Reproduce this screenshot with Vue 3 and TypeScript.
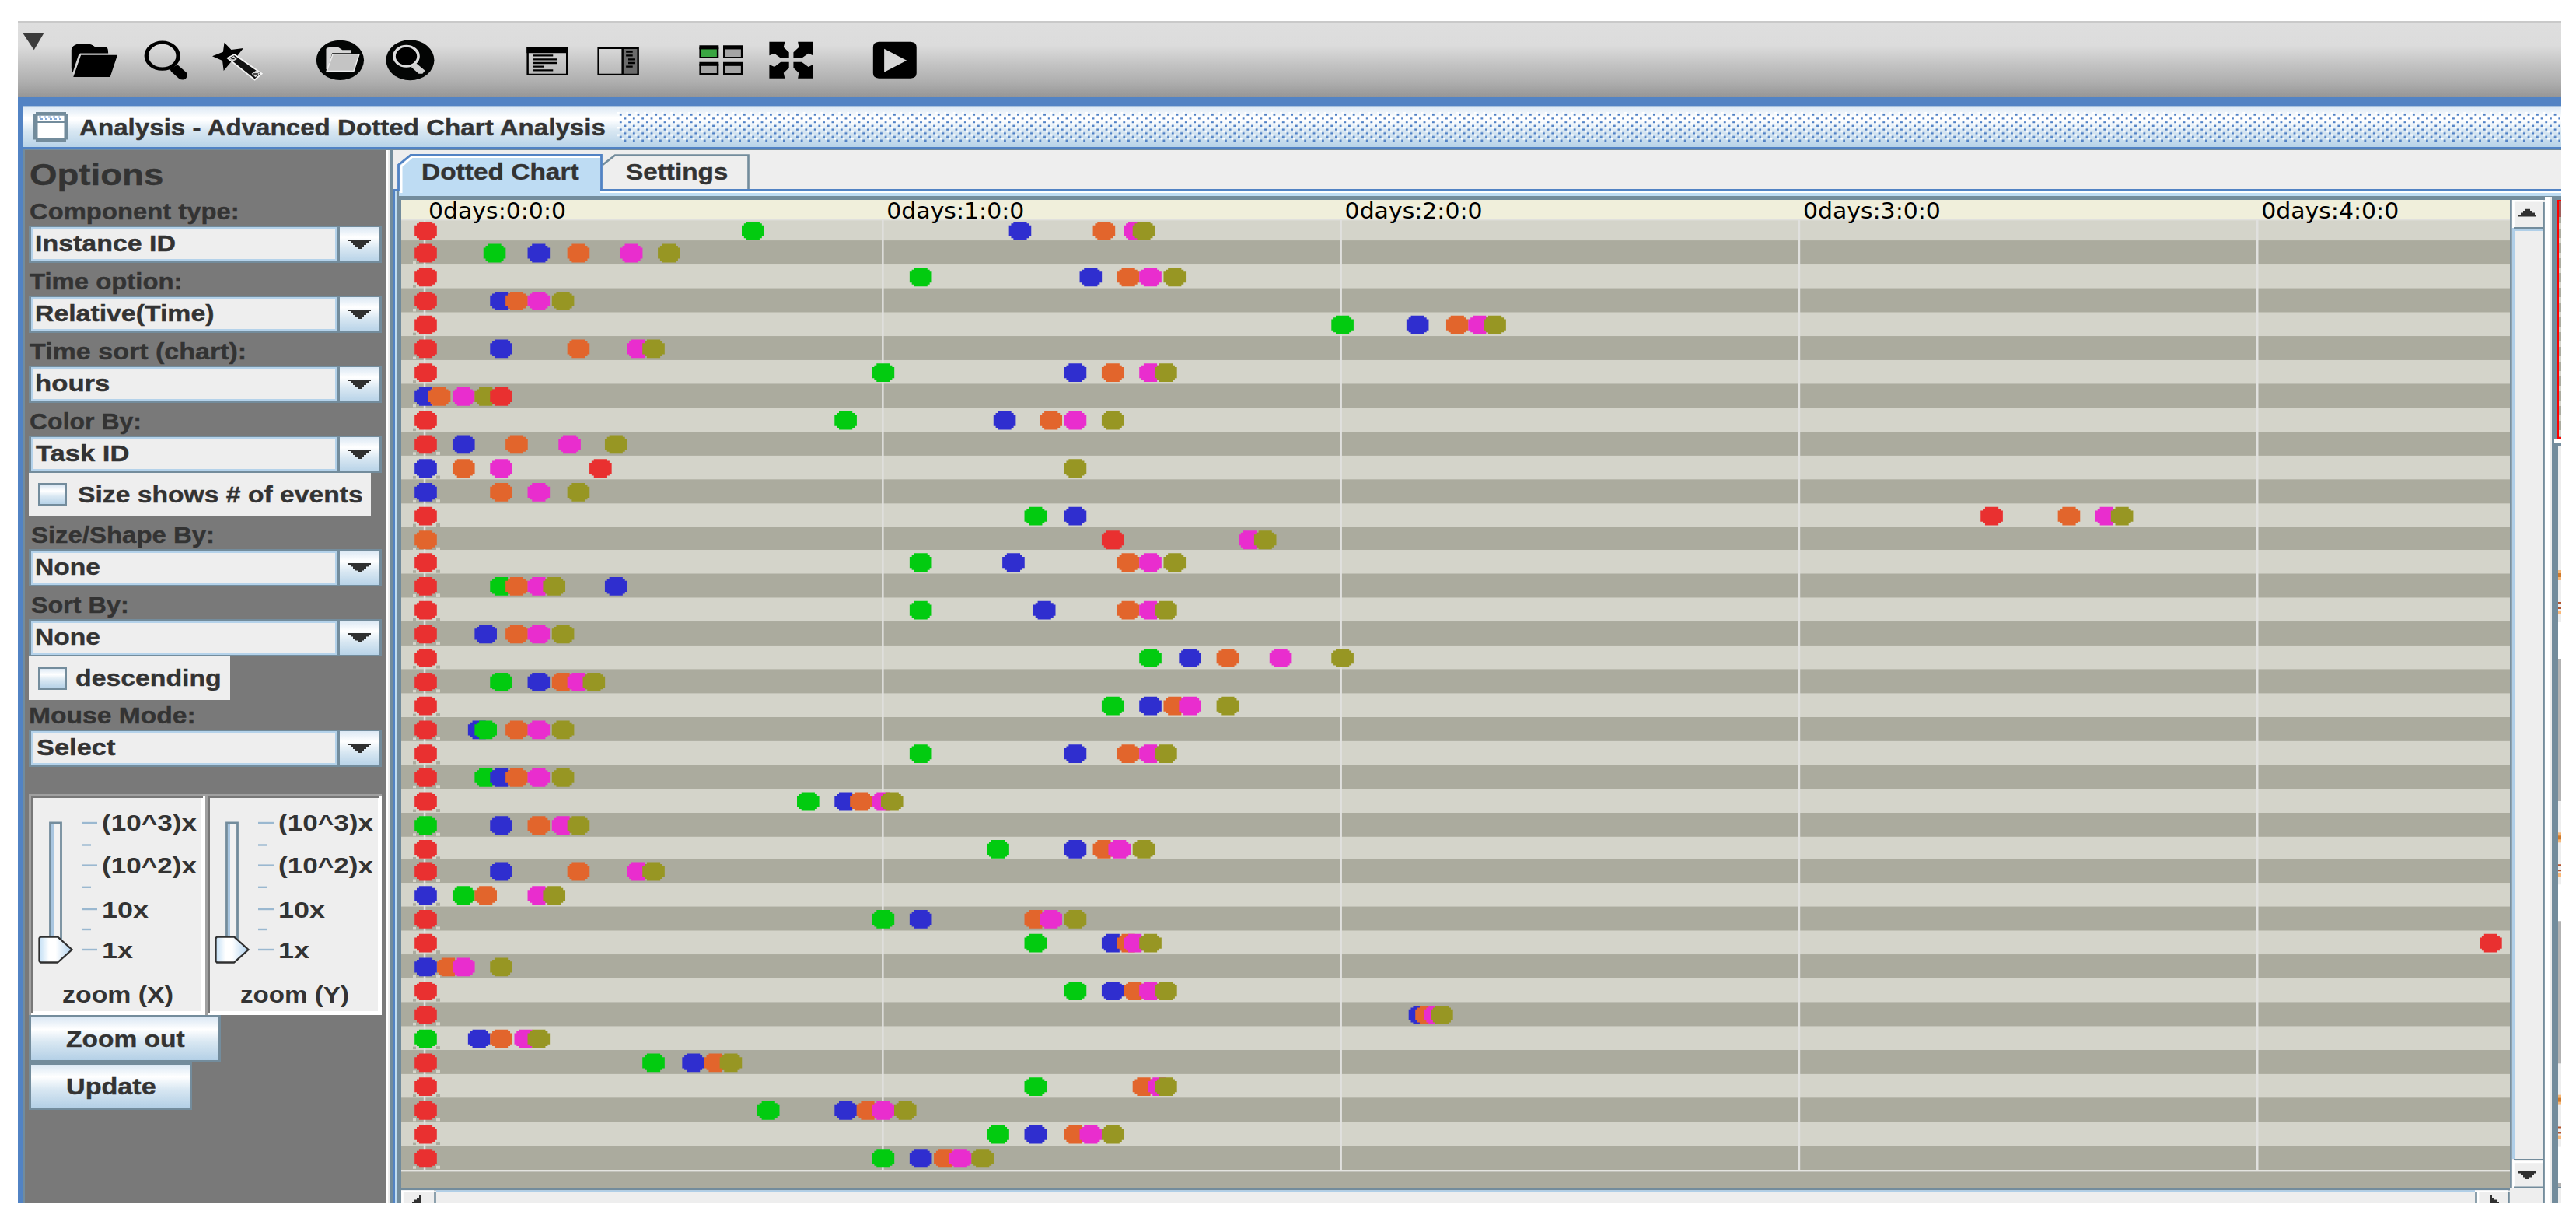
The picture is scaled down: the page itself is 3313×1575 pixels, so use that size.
<script setup lang="ts">
import type { Directive } from 'vue'

/* Stretches a text run horizontally so that it fills the given width. */
const vFit: Directive<HTMLElement, number> = {
  mounted(el, binding) {
    el.style.transform = `scaleX(${binding.value / el.offsetWidth})`
  },
}

interface Shape { d: string; fill?: string; stroke?: string; sw?: number }
interface Icon { name: string; gap: number; x: number; w: number; shapes: Shape[] }

/* Icon artwork sits on a grid of 2.45 x 3 units per pixel. */
const GX = 2.45
const icons: Icon[] = [
  { name: 'menu', gap: 16, x: 72, w: 70, shapes: [{ d: 'M72 126H140L108 193Z', fill: '#3c3c3c' }] },
  { name: 'open', gap: 82, x: 224, w: 150, shapes: [
    { d: 'M226 192Q228 176 244 170H282Q294 172 302 183H336Q342 184 342 206H254L248 214L230 280L226 264Z' },
    { d: 'M256 212H371L348 297H232Z' },
    { d: 'M232 286L254 208H342', fill: 'none', stroke: '#d8d8d8', sw: 4 },
  ] },
  { name: 'find', gap: 80, x: 454, w: 140, shapes: [
    { d: 'M512 164A50 51 0 1 0 512 266A50 51 0 1 0 512 164Z', fill: 'none', stroke: '#000', sw: 13 },
    { d: 'M536 266L560 250L588 280Q594 290 586 304Q576 312 564 302L540 276Z' },
  ] },
  { name: 'wand', gap: 74, x: 668, w: 160, shapes: [
    { d: 'M706 164L728 192L766 186L748 214L752 240L728 238L704 273L700 234L668 217L702 200Z' },
    { d: 'M716 224L738 210L824 284L802 308Z', fill: '#111', stroke: '#f4f4f4', sw: 5 },
    { d: 'M722 226L736 216L746 228L732 238ZM792 284L806 272L818 284L804 298Z', fill: '#d8d8d8' },
    { d: 'M728 226H738M798 285H812', fill: 'none', stroke: '#111', sw: 5 },
  ] },
  { name: 'open-circle', gap: 166, x: 994, w: 154, shapes: [
    { d: 'M1071 155A75 77 0 1 0 1071 309A75 77 0 1 0 1071 155Z', fill: '#030504' },
    { d: 'M1027 268V190Q1028 183 1036 183H1066L1078 193H1106V205H1046L1031 268Z', fill: '#d6d6d6' },
    { d: 'M1048 209H1131L1114 274H1029Z', fill: '#c4c4c4', stroke: '#ececec', sw: 4 },
  ] },
  { name: 'find-circle', gap: 68, x: 1216, w: 156, shapes: [
    { d: 'M1293 154A76 78 0 1 0 1293 310A76 78 0 1 0 1293 154Z', fill: '#030504' },
    { d: 'M1281 178A38 39 0 1 0 1281 256A38 39 0 1 0 1281 178Z', fill: '#000', stroke: '#dcdcdc', sw: 9 },
    { d: 'M1296 258L1312 244L1340 272L1332 284H1320Z', fill: '#d0d0d0' },
  ] },
  { name: 'text-window', gap: 288, x: 1660, w: 134, shapes: [
    { d: 'M1664 186H1788V287H1664Z', fill: 'none', stroke: '#000', sw: 6 },
    { d: 'M1661 183H1791V205H1661Z' },
    { d: 'M1682 214H1744M1682 229H1758M1682 243H1758M1682 257H1716M1682 271H1744', fill: 'none', stroke: '#000', sw: 7 },
  ] },
  { name: 'split-window', gap: 88, x: 1882, w: 134, shapes: [
    { d: 'M1962 186H2011V287H1962Z', fill: '#6b6b6b' },
    { d: 'M1886 186H2011V287H1886ZM1962 186V287', fill: 'none', stroke: '#000', sw: 6 },
    { d: 'M1973 200H1994M1973 214H1994M1980 229H2002M1980 243H2002M1973 257H1994', fill: 'none', stroke: '#000', sw: 7 },
  ] },
  { name: 'tiles', gap: 186, x: 2202, w: 140, shapes: [
    { d: 'M2206 187H2261V222H2206Z', fill: '#3aa642', stroke: '#000', sw: 6 },
    { d: 'M2281 187H2337V222H2281ZM2206 250H2261V285H2206ZM2281 250H2337V285H2281Z', fill: '#a4a4a4', stroke: '#000', sw: 6 },
    { d: 'M2203 175H2264V190H2203ZM2278 175H2340V190H2278ZM2203 239H2264V254H2203ZM2278 239H2340V254H2278Z' },
  ] },
  { name: 'expand', gap: 82, x: 2424, w: 140, shapes: [
    { d: 'M2425 161H2474L2470 182L2487 202V224H2461L2441 206L2425 214Z' },
    { d: 'M2563 161H2515L2518 182L2501 202V224H2527L2548 206L2563 214Z' },
    { d: 'M2425 302H2474L2470 281L2487 262V239H2461L2441 258L2425 249Z' },
    { d: 'M2563 302H2515L2518 281L2501 262V239H2527L2548 258L2563 249Z' },
  ] },
  { name: 'run', gap: 186, x: 2750, w: 140, shapes: [
    { d: 'M2770 161H2871Q2889 163 2889 182V282Q2889 300 2871 302H2770Q2752 300 2752 282V182Q2752 163 2770 161Z' },
    { d: 'M2787 188L2858 233L2787 278Z', fill: '#d8d8d8' },
  ] },
]

interface Field { label: string; labelWidth: number; inset: number; value: string; valueWidth: number; valueInset: number; tight?: boolean; check?: { text: string; width: number; box: number; inset: number } }
const fields: Field[] = [
  { label: 'Component type:', labelWidth: 270, inset: 2, value: 'Instance ID', valueWidth: 181, valueInset: 2 },
  { label: 'Time option:', labelWidth: 196, inset: 2, value: 'Relative(Time)', valueWidth: 231, valueInset: 2 },
  { label: 'Time sort (chart):', labelWidth: 279, inset: 2, value: 'hours', valueWidth: 96, valueInset: 2 },
  { label: 'Color By:', labelWidth: 144, inset: 2, value: 'Task ID', valueWidth: 121, valueInset: 3, check: { text: 'Size shows # of events', width: 367, box: 440, inset: 100 } },
  { label: 'Size/Shape By:', labelWidth: 236, inset: 4, value: 'None', valueWidth: 84, valueInset: 2 },
  { label: 'Sort By:', labelWidth: 126, inset: 4, value: 'None', valueWidth: 84, valueInset: 2, check: { text: 'descending', width: 188, box: 259, inset: 97 } },
  { label: 'Mouse Mode:', labelWidth: 215, inset: 1, value: 'Select', valueWidth: 101, valueInset: 4, tight: true },
]

const sliders = [
  { title: 'zoom (X)', x: 43, w: 143 },
  { title: 'zoom (Y)', x: 45, w: 140 },
]
const marks = [
  { text: '(10^3)x', x: 94, y: 47, w: 122, tick: 37 },
  { text: '(10^2)x', x: 94, y: 101.5, w: 122, tick: 91.6 },
  { text: '10x', x: 94, y: 158.5, w: 60, tick: 148 },
  { text: '1x', x: 94, y: 210.5, w: 40, tick: 200 },
]
const minorTicks = [65.5, 119.8, 174]

/* Events per instance: colour key followed by minutes since the case start. */
const rows: string[] = [
  'R0 G43 B78 O89 M93 Y94', 'R0 G9 B15 O20 M27 Y32', 'R0 G65 B87 O92 M95 Y98', 'R0 B10 O12 M15 Y18',
  'R0 G120 B130 O135 M138 Y140', 'R0 B10 O20 M28 Y30', 'R0 G60 B85 O90 M95 Y97', 'B0 O2 M5 Y8 R10',
  'R0 G55 B76 O82 M85 Y90', 'R0 B5 O12 M19 Y25', 'B0 O5 M10 R23 Y85', 'B0 O10 M15 Y20',
  'R0 G80 B85 R205 O215.2 M220.2 Y222.2', 'O0 R90 M108 Y110', 'R0 G65 B77 O92 M95 Y98', 'R0 G10 O12 M15 Y17 B25',
  'R0 G65 B81 O92 M95 Y97', 'R0 B8 O12 M15 Y18', 'R0 G95 B100 O105 M112 Y120', 'R0 G10 B15 O18 M20 Y22',
  'R0 G90 B95 O98 M100 Y105', 'R0 B7 G8 O12 M15 Y18', 'R0 G65 B85 O92 M95 Y97', 'R0 G8 B10 O12 M15 Y18',
  'R0 G50 B55 O57 M60 Y61', 'G0 B10 O15 M18 Y20', 'R0 G75 B85 O89 M91 Y94', 'R0 B10 O20 M28 Y30',
  'B0 G5 O8 M15 Y17', 'R0 G60 B65 O80 M82 Y85', 'R0 G80 B90 O92 M93 Y95 R270.4', 'B0 O3 M5 Y10',
  'R0 G85 B90 O93 M95 Y97', 'R0 B130.2 O131.1 M132.3 Y133.2', 'G0 B7 O10 M13 Y15', 'R0 G30 B35 O38 Y40',
  'R0 G80 O94 M96 Y97', 'R0 G45 B55 O58 M60 Y63', 'R0 G75 B80 O85 M87 Y90', 'R0 G60 B65 O68 M70 Y73',
]
const colours: Record<string, string> = { R: '#e93030', G: '#02cb10', B: '#2f2ecf', O: '#e2652c', M: '#e92dce', Y: '#979623' }

const rowTop = (k: number): number =>
  k === 0 ? 280.6 : k < 14 ? 309.3 + 30.73 * (k - 1) : k < 27 ? 707 + 30.73 * (k - 14) : 1104.3 + 30.73 * (k - 27)

/* Dots snap down to the chart's coarse horizontal unit. */
const UNIT = 2.84
const timeX = (minutes: number): number =>
  minutes === 0 ? 547.5 : 548 + UNIT * Math.floor((minutes * 589.5) / 60 / UNIT + 0.05)

const bands = rows.map((events, k) => ({
  y: rowTop(k),
  h: rowTop(k + 1) - rowTop(k),
  cy: rowTop(k) + 16.2,
  light: k % 2 === 0,
  dots: events.split(' ').map((e) => ({ fill: colours[e[0]], x: timeX(Number(e.slice(1))) })),
}))
bands[39].h = 30.8

const hours = [0, 1, 2, 3, 4]
const dotPath = 'M-8.6 -11.9H8.6V-9.5H11.5V-7.1H14.3V7.1H11.5V9.5H8.6V11.9H-8.6V9.5H-11.5V7.1H-14.3V-7.1H-11.5V-9.5H-8.6Z'
</script>

<template>
  <div class="page">
    <header class="toolbar">
      <svg v-for="i in icons" :key="i.name" :width="i.w / GX" height="70" :viewBox="`${i.x} 120 ${i.w} 210`"
        preserveAspectRatio="none" :style="{ marginLeft: (i.name === 'menu' ? 6.4 : i.gap / GX) + 'px' }">
        <path v-for="(s, n) in i.shapes" :key="n" :d="s.d" :fill="s.fill ?? '#000'" :stroke="s.stroke" :stroke-width="s.sw" />
      </svg>
    </header>

    <div class="desktop">
      <div class="titlebar">
        <svg class="frame-icon" width="45" height="38" viewBox="0 0 45 38">
          <path d="M3 0H42V2.4H45V35.6H42V38H3V35.6H0V2.4H3Z" fill="#738c9c" />
          <path d="M5.5 4.8H39.5V11.5H5.5ZM5.5 14H39.5V33H5.5Z" fill="#fff" />
          <path d="M7 6.5H10M13 6.5H16M19 6.5H22M25 6.5H28M31 6.5H34M9 9H12M15 9H18M21 9H24M27 9H30M33 9H36" stroke="#84a9d8" stroke-width="2" />
        </svg>
        <div class="title"><span v-fit="677" class="run">Analysis - Advanced Dotted Chart Analysis</span></div>
        <svg class="bumps" width="2499" height="38">
          <defs>
            <pattern id="bumps" width="11.36" height="9.5" patternUnits="userSpaceOnUse">
              <rect width="2.84" height="2.37" fill="#fff" /><rect x="5.68" y="4.75" width="2.84" height="2.37" fill="#fff" />
              <rect x="2.84" y="2.37" width="2.84" height="2.37" fill="#4f80c5" /><rect x="8.52" y="7.12" width="2.84" height="2.37" fill="#4f80c5" />
            </pattern>
          </defs>
          <rect width="2499" height="38" fill="url(#bumps)" />
        </svg>
      </div>

      <div class="body">
        <aside class="sidebar">
          <h1><span v-fit="172" class="run">Options</span></h1>
          <template v-for="f in fields" :key="f.label">
            <div class="label" :class="{ tight: f.tight }" :style="{ paddingLeft: f.inset - 1 + 'px' }">
              <span v-fit="f.labelWidth" class="run">{{ f.label }}</span>
            </div>
            <div class="combo">
              <div class="value" :style="{ paddingLeft: f.valueInset + 'px' }"><span v-fit="f.valueWidth" class="run">{{ f.value }}</span></div>
              <div class="drop"><svg width="29" height="12"><path d="M0 0H29V2H26V4.5H23V7H20V9.500H17V12H12V9.500H9V7H6V4.500H3V2H0Z" fill="#303030" /></svg></div>
            </div>
            <div v-if="f.check" class="check" :style="{ width: f.check.box + 'px' }">
              <i class="tick"></i>
              <span v-fit="f.check.width" class="run" :style="{ marginLeft: f.check.inset - 86 + 'px' }">{{ f.check.text }}</span>
            </div>
          </template>

          <div class="sliders">
            <svg v-for="s in sliders" :key="s.title" class="slider" width="227" height="284">
              <rect width="227" height="284" fill="#a0a0a0" />
              <path d="M3 3H227V284H3Z" fill="#fff" />
              <path d="M3 2.500H224V5H6V281H3Z" fill="#777" />
              <path d="M6 5H222V279H6Z" fill="#eee" />
              <path d="M27.500 190V37H41.500V190" fill="#f2f2f2" stroke="#738c9c" stroke-width="2.800" />
              <path d="M30.500 38.500V190" stroke="#a9c6e0" stroke-width="3" />
              <path v-for="m in marks" :key="m.text" :d="`M68 ${m.tick}H88`" stroke="#9ab8d0" stroke-width="2.400" />
              <path v-for="t in minorTicks" :key="t" :d="`M68 ${t}H80`" stroke="#9ab8d0" stroke-width="2.400" />
              <defs>
                <linearGradient id="thumb"><stop offset="0" stop-color="#c3dff5" /><stop offset=".3" stop-color="#fff" /><stop offset=".5" stop-color="#fff" /><stop offset="1" stop-color="#b0d2ee" /></linearGradient>
              </defs>
              <path d="M15 183.500H37L55.500 200L37 216.500H15L13.500 214.500V185.500Z" fill="url(#thumb)" stroke="#303030" stroke-width="2.300" />
              <text v-for="m in marks" :key="'t' + m.text" :x="m.x" :y="m.y" :textLength="m.w" lengthAdjust="spacingAndGlyphs">{{ m.text }}</text>
              <text :x="s.x" y="267.500" :textLength="s.w" lengthAdjust="spacingAndGlyphs">{{ s.title }}</text>
            </svg>
          </div>
          <button class="push zoom-out"><span v-fit="153" class="run">Zoom out</span></button>
          <button class="push update"><span v-fit="116" class="run">Update</span></button>
        </aside>

        <div class="divider"></div>

        <main class="pane">
          <nav class="tabs">
            <div class="tab active">
              <svg width="266" height="59">
                <path d="M2 59V20L18 6H261V59Z" fill="#bedcf3" />
                <path d="M5 55V21L19 8.500H261" fill="none" stroke="#fff" stroke-width="3" />
                <path d="M1.500 52V19L17 6.500H262.500V52" fill="none" stroke="#5283c4" stroke-width="2.800" />
              </svg>
              <span v-fit="203" class="run">Dotted Chart</span>
            </div>
            <div class="tab">
              <svg width="192" height="50"><path d="M1 19L17 6.500H188.500V50" fill="none" stroke="#738c9c" stroke-width="2.600" /></svg>
              <span v-fit="131" class="run">Settings</span>
            </div>
          </nav>
          <div class="strip"></div>
          <div class="content">
            <div class="edge"></div>
            <div class="view">
              <svg class="plot" width="2712" height="1271" viewBox="516 257 2712 1271">
                <rect x="516" y="257" width="2712" height="1271" fill="#abab9e" />
                <g v-for="(b, k) in bands" :key="k">
                  <rect x="516" :y="b.y" width="2712" :height="b.h" :fill="b.light ? '#d4d4ca' : '#abab9e'" />
                </g>
                <rect x="516" y="257" width="2712" height="24.500" fill="#f0efdb" />
                <rect x="516" y="281" width="2712" height="2.400" fill="#e0e0dd" />
                <rect x="516" y="1504" width="2712" height="2.400" fill="#e4e4e0" />
                <rect v-for="h in hours" :key="h" :x="544.800 + 589.300 * h" y="283" width="2.500" height="1221" fill="#e0e0de" />
                <g v-for="(b, k) in bands" :key="'d' + k">
                  <template v-if="k > 0">
                    <rect x="531" :y="b.cy + 10" width="4" height="3.500" :fill="b.light ? '#abab9e' : '#d4d4ca'" />
                    <rect v-if="k > 8" x="561" :y="b.cy + 9.500" width="5" height="4" :fill="b.light ? '#abab9e' : '#d4d4ca'" />
                  </template>
                  <path v-for="(d, n) in b.dots" :key="n" :d="dotPath" :fill="d.fill" :transform="`translate(${d.x} ${b.cy})`" />
                </g>
                <text v-for="h in hours" :key="'l' + h" :x="551 + 589.300 * h" y="280.700" textLength="177" lengthAdjust="spacingAndGlyphs">0days:{{ h }}:0:0</text>
              </svg>
              <div class="hscroll">
                <svg width="2712" height="19">
                  <rect width="2712" height="19" fill="#eee" />
                  <rect width="2712" height="2.400" fill="#738c9c" />
                  <path d="M45 3.500H2667" stroke="#b0cfe8" stroke-width="2.400" />
                  <path d="M0 3.500H42M1.500 3V19M2667 3.500H2709M2671 3V19" stroke="#fff" stroke-width="2.600" />
                  <path d="M43.500 4V19M2668.500 4V19M2710.500 4V19" stroke="#738c9c" stroke-width="2.600" />
                  <path d="M26 9V19H14V17H17V14.500H20V12H23V9ZM2686 9V19H2698V17H2695V14.500H2692V12H2689V9Z" fill="#303030" />
                </svg>
              </div>
            </div>
            <div class="vscroll">
              <svg width="45" height="1290">
                <rect width="45" height="1290" fill="#eee" />
                <path d="M1.400 0V1271M43.500 3V1290" stroke="#738c9c" stroke-width="2.700" />
                <path d="M4.500 36V1233" stroke="#b0cfe8" stroke-width="3" />
                <path d="M4 1.300H42M4.500 0V36M4.500 1234V1271M5 1237H42" stroke="#fff" stroke-width="2.600" />
                <path d="M5 36.200H42M5 1234H42M5 1269.500H42" stroke="#738c9c" stroke-width="2.200" />
                <path d="M6 38.800H42" stroke="#b0cfe8" stroke-width="2.200" />
                <path d="M11 21.500V19H14V16.500H17V14H20V11.800H26V14H29V16.500H32V19H34V21.500ZM11 1249H34V1251.500H31V1254H28V1256.500H25V1259H20V1256.500H17V1254H14V1251.500H11Z" fill="#303030" />
              </svg>
            </div>
            <div class="gap"></div>
            <svg class="overview" width="12" height="1290" viewBox="0 257 12 1290">
              <defs>
                <pattern id="mini" y="279" width="12" height="19" patternUnits="userSpaceOnUse">
                  <rect width="12" height="19" fill="#abab9e" /><rect y="8" width="12" height="7" fill="#d4d4ca" />
                </pattern>
              </defs>
              <rect y="257" width="12" height="1290" fill="#738c9c" />
              <rect x="6" y="257" width="6" height="307" fill="#f00" />
              <rect x="9" y="259" width="3" height="20" fill="#a05f5c" />
              <rect x="9" y="279" width="3" height="283" fill="url(#mini)" />
              <rect x="3" y="564.500" width="9" height="5" fill="#fff" />
              <rect x="8" y="574" width="4" height="973" fill="#eee" />
              <g v-for="n in 3" :key="n" :transform="`translate(0 ${337.300 * (n - 1)})`">
                <rect x="8" y="733" width="4" height="13" fill="#f7b878" /><rect x="8" y="737" width="4" height="5" fill="#cf7a2c" />
                <path d="M8 775H12M8 782H12" stroke="#b4532c" stroke-width="2" />
                <rect x="8" y="785" width="4" height="5" fill="#fbb878" />
                <rect x="8" y="800" width="4" height="47" fill="#fff" />
                <rect v-if="n < 3" x="8" y="847" width="4" height="183" fill="#b2b2b2" />
              </g>
              <rect x="8" y="1521" width="4" height="5" fill="#b2b2b2" /><rect x="8" y="1526" width="4" height="2" fill="#738c9c" />
            </svg>
          </div>
        </main>
      </div>
    </div>
  </div>
</template>

<style>
body { background: #fff; }
</style>

<style scoped>
.page { box-sizing: border-box; width: 3313px; height: 1575px; padding: 27px 19px 28px 23px; background: #fff; overflow: hidden; font: bold 30px "Liberation Sans", Arial, sans-serif; color: #333; -webkit-text-stroke: 0.4px #333; }
.page svg { display: block; flex: none; }
.run { display: inline-block; white-space: nowrap; transform-origin: left center; }
.toolbar { box-sizing: border-box; height: 98px; padding-top: 10px; border-top: 3px solid #c9c9c9; display: flex; background: linear-gradient(#dedede 0, #dcdcdc 30%, #c4c4c4 55%, #aeaeae 80%, #969696 100%); }
.desktop { height: 1422px; box-sizing: border-box; padding: 11px 0 0 6px; background: #5283c4; overflow: hidden; }
.titlebar { box-sizing: border-box; height: 53px; border-top: 1px solid #a6c1df; padding-left: 14px; display: flex; align-items: flex-start; background: linear-gradient(#dbe8f4, #fff 28%, #fdfeff 34%, #d8e7f2 60%, #b8d3e8 100%); }
.frame-icon { margin-top: 7px; }
.title { width: 692px; margin-left: 14px; line-height: 54px; }
.bumps { margin-top: 7px; }
.body { box-sizing: border-box; height: 1356px; margin-top: 2px; border-top: 2px solid #738c9c; border-left: 3px solid #738c9c; display: flex; }
.sidebar { box-sizing: border-box; width: 464px; flex: none; padding-left: 5px; background: #797979; }
h1 { margin: 0; padding: 8px 0 0 1px; height: 47px; font-size: 39px; line-height: 47px; }
.label { box-sizing: border-box; height: 42.2px; padding-top: 7px; line-height: 34px; }
.label.tight { height: 38px; padding-top: 3px; }
.combo { box-sizing: border-box; width: 454px; height: 47.7px; border: 3px solid #738c9c; border-width: 2.400px 3px; display: flex; background: #738c9c; }
.value { box-sizing: border-box; width: 394px; margin-right: 3px; border: 3px solid #b4d2ea; background: #eee; line-height: 35px; }
.drop { flex: 1; display: flex; align-items: center; justify-content: center; background: linear-gradient(#dbe8f4, #fff 30%, #d8e7f2 62%, #b8d3e8); }
.check { box-sizing: border-box; height: 56.600px; padding-left: 12px; display: flex; align-items: center; background: #eee; line-height: 52px; }
.check .run { width: max-content; }
.tick { box-sizing: border-box; width: 37px; height: 30px; flex: none; border: 3px solid #738c9c; background: linear-gradient(#dbe8f4, #fff 30%, #d8e7f2 60%, #b8d3e8); }
.sliders { display: flex; margin-top: 35px; }
.slider text { font: bold 30px "Liberation Sans", Arial, sans-serif; fill: #333; }
.push { box-sizing: border-box; display: block; padding: 0 0 0 45px; border: 3px solid #738c9c; border-radius: 0; text-align: left; font: inherit; color: inherit; line-height: 55px; background: linear-gradient(#dbe8f4, #fff 28%, #d8e7f2 58%, #b4d0e6); }
.zoom-out { width: 247px; height: 61px; }
.update { width: 210px; height: 61px; }
.divider { width: 9px; flex: none; background: linear-gradient(90deg, #fff 3px, #eee 3px 6px, #738c9c 6px); }
.pane { flex: 1; min-width: 0; background: #eee; }
.tabs { height: 50px; padding-left: 6px; display: flex; }
.tab { position: relative; box-sizing: border-box; width: 191px; height: 50px; padding-left: 31px; line-height: 55px; }
.tab.active { width: 263px; padding-left: 31px; z-index: 1; }
.tab svg { position: absolute; left: 0; top: 0; }
.tab .run { position: relative; }
.strip { height: 14px; background: linear-gradient(#5283c4 2.500px, #fff 2.500px 5px, #bedcf3 5px 9px, #738c9c 9px); }
.content { display: flex; height: 1290px; }
.edge { width: 11px; flex: none; margin-top: -11px; background: linear-gradient(90deg, #5283c4 3px, #bedcf3 3px 6px, #738c9c 6px); }
.view { width: 2712px; flex: none; }
.plot text { font: 28px "DejaVu Sans", Verdana, sans-serif; fill: #000; -webkit-text-stroke: 0; }
.gap { width: 9px; flex: none; margin-top: -4px; background: linear-gradient(90deg, #fff 6px, #eee 6px); }
</style>
